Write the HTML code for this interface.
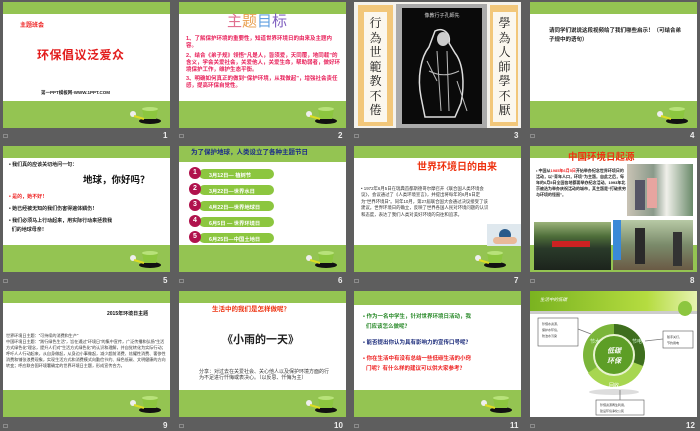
<!DOCTYPE html>
<html><head><meta charset="utf-8"><style>
*{margin:0;padding:0;box-sizing:border-box}
body{width:700px;height:431px;background:#5e5e5e;position:relative;overflow:hidden;font-family:"Liberation Sans","Noto Sans CJK SC",sans-serif}
.s{position:absolute;width:167px;height:126px;background:#fff;overflow:hidden}
.top{position:absolute;left:0;top:0;width:100%;height:12px;background:#94c452}
.bot{position:absolute;left:0;bottom:0;width:100%;height:27px;background:#94c452}
.cup{position:absolute;right:8px;bottom:4px;width:34px;height:20px}
.n{position:absolute;color:#eee;font-size:8px;font-weight:bold}
.ic{position:absolute;width:5px;height:4px;border:1px solid #aaa;opacity:.6}
.t{position:absolute;font-weight:bold;line-height:1.25}
.cp{position:absolute;top:10px;width:23px;height:110px;background:#fbf7ee;font-family:'Noto Serif CJK SC',serif;font-size:12px;line-height:14.5px;text-align:center;color:#111;padding-top:4px}
</style></head><body>

<!-- slide 1 -->
<div class="s" style="left:3px;top:2px">
<div class="top"></div><div class="bot"></div>
<div class="t" style="left:17px;top:21px;color:#e22;font-size:6px">主题班会</div>
<div class="t" style="left:34px;top:46px;color:#e21b1b;font-size:12px;letter-spacing:.5px">环保倡议泛爱众</div>
<div class="t" style="left:38px;top:88px;color:#222;font-size:4.5px">第一PPT模板网-WWW.1PPT.COM</div>
<svg class="cup" viewBox="0 0 34 20"><ellipse cx="22" cy="17" rx="11" ry="3" fill="#111"/><path d="M14 5h16l-2 10h-12z" fill="#8cc63f"/><ellipse cx="22" cy="5" rx="8" ry="2" fill="#b8e27a"/><circle cx="5" cy="10" r="3" fill="#eee"/><path d="M6 12l10 3" stroke="#dd2" stroke-width="2"/></svg>
</div>
<!-- slide 2 -->
<div class="s" style="left:179px;top:2px">
<div class="top"></div><div class="bot"></div>
<div class="t" style="left:48px;top:11px;font-size:15px;font-weight:normal;color:#c9a"><span style="color:#e07090">主</span><span style="color:#e9a050">题</span><span style="color:#60a0e0">目</span><span style="color:#8060c0">标</span></div>
<div class="t" style="left:7px;top:34px;width:156px;color:#e8205a;font-size:5.5px">1、了解保护环境的重要性，知道世界环境日的由来及主题内容。<br><span style="display:block;margin-top:3px">2、结合《弟子规》领悟“凡是人，皆须爱，天同覆，地同载”的含义，学会关爱社会，关爱他人，关爱生命，帮助弱者，做好环境保护工作，维护生态平衡。</span><span style="display:block;margin-top:3px">3、明确如何真正的做到“保护环境，从我做起”，增强社会责任感，提高环保自觉性。</span></div>
<svg class="cup" viewBox="0 0 34 20"><ellipse cx="22" cy="17" rx="11" ry="3" fill="#111"/><path d="M14 5h16l-2 10h-12z" fill="#8cc63f"/><ellipse cx="22" cy="5" rx="8" ry="2" fill="#b8e27a"/><circle cx="5" cy="10" r="3" fill="#eee"/><path d="M6 12l10 3" stroke="#dd2" stroke-width="2"/></svg>
</div>
<!-- slide 3 -->
<div class="s" style="left:354px;top:2px;background:#f4f2ec">
<div style="position:absolute;left:4px;top:3px;width:35px;height:121px;background:#f2c77a"></div>
<div class="cp" style="left:10px">行為世範教不倦</div>
<div style="position:absolute;left:42px;top:2px;width:91px;height:124px;background:#aaa"></div>
<div style="position:absolute;left:48px;top:6px;width:80px;height:116px;background:#0a0a0a;color:#ddd;font-size:5px;text-align:center;padding-top:4px">像教行子孔師先
<svg width="70" height="100" viewBox="0 0 70 100" style="display:block;margin:2px auto"><path d="M28 10c8-4 16 2 14 12l6 10c8 10 10 30 6 50l-6 14h-30l-4-20c-4-20 0-40 8-50z" fill="none" stroke="#ddd" stroke-width="1.5"/><path d="M30 30l4 60M40 30l2 60M22 50c10 5 20 5 30 0M20 40l10 20M50 60l10 30" stroke="#bbb" stroke-width="1" fill="none"/><ellipse cx="36" cy="18" rx="6" ry="7" fill="#ccc"/></svg></div>
<div style="position:absolute;left:136px;top:3px;width:28px;height:121px;background:#f2c77a"></div>
<div class="cp" style="left:139px">學為人師學不厭</div>
</div>
<!-- slide 4 -->
<div class="s" style="left:530px;top:2px">
<div class="top"></div><div class="bot"></div>
<div class="t" style="left:19px;top:25px;width:135px;color:#222;font-size:5.5px;line-height:1.6">请同学们说说这段视频给了我们哪些启示！（可结合弟子规中的语句）</div>
<svg class="cup" viewBox="0 0 34 20"><ellipse cx="22" cy="17" rx="11" ry="3" fill="#111"/><path d="M14 5h16l-2 10h-12z" fill="#8cc63f"/><ellipse cx="22" cy="5" rx="8" ry="2" fill="#b8e27a"/><circle cx="5" cy="10" r="3" fill="#eee"/><path d="M6 12l10 3" stroke="#dd2" stroke-width="2"/></svg>
</div>

<!-- slide 5 -->
<div class="s" style="left:3px;top:146px">
<div class="top"></div><div class="bot"></div>
<div class="t" style="left:6px;top:16px;font-size:5px;color:#222">• 我们真的应该关切地问一句：</div>
<div class="t" style="left:80px;top:29px;font-size:9.5px;color:#111">地球，你好吗？</div>
<div class="t" style="left:6px;top:48px;font-size:5px;color:#e22">• 是的，她不好！</div>
<div class="t" style="left:6px;top:60px;font-size:5px;color:#222">• 她已经被无知的我们伤害得遍体鳞伤！</div>
<div class="t" style="left:6px;top:71px;width:160px;font-size:5px;color:#222;line-height:1.8">• 我们必须马上行动起来，用实际行动来拯救我<br>&nbsp;&nbsp;们的地球母亲！</div>
<svg class="cup" viewBox="0 0 34 20"><ellipse cx="22" cy="17" rx="11" ry="3" fill="#111"/><path d="M14 5h16l-2 10h-12z" fill="#8cc63f"/><ellipse cx="22" cy="5" rx="8" ry="2" fill="#b8e27a"/><circle cx="5" cy="10" r="3" fill="#eee"/><path d="M6 12l10 3" stroke="#dd2" stroke-width="2"/></svg>
</div>
<!-- slide 6 -->
<div class="s" style="left:179px;top:146px">
<div class="top" style="height:16px"></div><div class="bot"></div>
<div class="t" style="left:12px;top:3px;font-size:6.5px;color:#1a2a8a">为了保护地球，人类设立了各种主题节日</div>
<div style="position:absolute;left:10px;top:22px">
<div style="position:relative;height:16px"><div style="position:absolute;left:10px;top:1px;width:75px;height:10px;border-radius:5px;background:#8cc63f;color:#fff;font-size:5.3px;font-weight:bold;padding:2px 0 0 10px">3月12日— 植树节</div><div style="position:absolute;left:0;top:-1px;width:12px;height:12px;border-radius:50%;background:#b0124d;color:#fff;font-size:7px;text-align:center;font-weight:bold;line-height:12px">1</div></div>
<div style="position:relative;height:16px"><div style="position:absolute;left:10px;top:1px;width:75px;height:10px;border-radius:5px;background:#8cc63f;color:#fff;font-size:5.3px;font-weight:bold;padding:2px 0 0 10px">3月22日—世界水日</div><div style="position:absolute;left:0;top:-1px;width:12px;height:12px;border-radius:50%;background:#b0124d;color:#fff;font-size:7px;text-align:center;font-weight:bold;line-height:12px">2</div></div>
<div style="position:relative;height:16px"><div style="position:absolute;left:10px;top:1px;width:75px;height:10px;border-radius:5px;background:#8cc63f;color:#fff;font-size:5.3px;font-weight:bold;padding:2px 0 0 10px">4月22日—世界地球日</div><div style="position:absolute;left:0;top:-1px;width:12px;height:12px;border-radius:50%;background:#b0124d;color:#fff;font-size:7px;text-align:center;font-weight:bold;line-height:12px">3</div></div>
<div style="position:relative;height:16px"><div style="position:absolute;left:10px;top:1px;width:75px;height:10px;border-radius:5px;background:#8cc63f;color:#fff;font-size:5.3px;font-weight:bold;padding:2px 0 0 10px">6月5日 — 世界环境日</div><div style="position:absolute;left:0;top:-1px;width:12px;height:12px;border-radius:50%;background:#b0124d;color:#fff;font-size:7px;text-align:center;font-weight:bold;line-height:12px">4</div></div>
<div style="position:relative;height:16px"><div style="position:absolute;left:10px;top:1px;width:75px;height:10px;border-radius:5px;background:#8cc63f;color:#fff;font-size:5.3px;font-weight:bold;padding:2px 0 0 10px">6月25日—中国土地日</div><div style="position:absolute;left:0;top:-1px;width:12px;height:12px;border-radius:50%;background:#b0124d;color:#fff;font-size:7px;text-align:center;font-weight:bold;line-height:12px">5</div></div>
</div>
<svg class="cup" viewBox="0 0 34 20"><ellipse cx="22" cy="17" rx="11" ry="3" fill="#111"/><path d="M14 5h16l-2 10h-12z" fill="#8cc63f"/><ellipse cx="22" cy="5" rx="8" ry="2" fill="#b8e27a"/><circle cx="5" cy="10" r="3" fill="#eee"/><path d="M6 12l10 3" stroke="#dd2" stroke-width="2"/></svg>
</div>
<!-- slide 7 -->
<div class="s" style="left:354px;top:146px">
<div class="top"></div><div class="bot"></div>
<div class="t" style="left:63px;top:16px;font-size:10px;color:#e31">世界环境日的由来</div>
<div class="t" style="left:7px;top:40px;width:128px;font-size:4.4px;color:#333;font-weight:normal;line-height:1.45">• 1972年6月5日在瑞典首都斯德哥尔摩召开《联合国人类环境会议》，会议通过了《人类环境宣言》，并提出将每年的6月5日定为“世界环境日”。同年10月，第27届联合国大会通过决议接受了该建议。世界环境日的确立，反映了世界各国人民对环境问题的认识和态度，表达了我们人类对美好环境的向往和追求。</div>
<div style="position:absolute;left:133px;top:78px;width:34px;height:22px;background:#dfe8ee"><div style="position:absolute;left:12px;top:5px;width:12px;height:12px;border-radius:50%;background:#2a5a8a"></div><div style="position:absolute;left:6px;top:13px;width:24px;height:7px;border-radius:4px;background:#e9b99a"></div></div>
<svg class="cup" viewBox="0 0 34 20" style="right:14px"><ellipse cx="22" cy="17" rx="11" ry="3" fill="#111"/><path d="M14 5h16l-2 10h-12z" fill="#8cc63f"/><ellipse cx="22" cy="5" rx="8" ry="2" fill="#b8e27a"/><circle cx="5" cy="10" r="3" fill="#eee"/><path d="M6 12l10 3" stroke="#dd2" stroke-width="2"/></svg>
</div>
<!-- slide 8 -->
<div class="s" style="left:530px;top:146px">
<div class="top"></div><div class="bot"></div>
<div class="t" style="left:38px;top:6px;font-size:9.5px;color:#e31">中国环境日起源</div>
<div class="t" style="left:6px;top:22px;width:90px;font-size:4px;color:#222;line-height:1.5">• 中国从<span style="color:#e22">1985年6月5日</span>开始举办纪念世界环境日的活动，以“青年人口，环境”为主题。自此之后，每年的6月5日全国各地都要举办纪念活动。1993年北京被选为举办庆祝活动的城市，其主题是“打破贫穷与环境的怪圈”。</div>
<div style="position:absolute;left:97px;top:18px;width:66px;height:52px;background:linear-gradient(90deg,#c9c3b5,#8a9a8a 40%,#f0f0ea 60%,#6a8a6a)"><div style="position:absolute;left:20px;top:14px;width:10px;height:30px;background:#e7a5a0"></div><div style="position:absolute;left:8px;top:16px;width:10px;height:30px;background:#556"></div></div>
<div style="position:absolute;left:4px;top:76px;width:77px;height:48px;background:linear-gradient(180deg,#9bb37a 0,#4e6e3a 30%,#2a3a2a 55%,#1c241c)"><div style="position:absolute;left:18px;top:19px;width:38px;height:6px;background:#c22"></div></div>
<div style="position:absolute;left:83px;top:74px;width:80px;height:50px;background:linear-gradient(180deg,#b7c9a5,#7a8a6a 50%,#6a5a45)"><div style="position:absolute;left:0;top:0;width:8px;height:40px;background:#3a8ad8"></div><div style="position:absolute;left:22px;top:8px;width:10px;height:36px;background:#2a2a2a"></div><div style="position:absolute;left:60px;top:12px;width:9px;height:34px;background:#333"></div></div>
</div>

<!-- slide 9 -->
<div class="s" style="left:3px;top:291px">
<div class="top"></div><div class="bot"></div>
<div class="t" style="left:104px;top:20px;font-size:5px;color:#111">2015年环境日主题</div>
<div style="position:absolute;left:3px;top:42px;width:160px;font-size:4.1px;color:#333;line-height:1.45">世界环境日主题：“可持续的消费和生产”<br>中国环境日主题：“践行绿色生活”，旨在通过“环境日”的集中宣传，广泛传播和弘扬“生活方式绿色化”理念，提升人们对“生活方式绿色化”的认识和理解，并自觉转化为实际行动；呼吁人人行动起来，从自身做起，从身边小事做起，减少超前消费、炫耀性消费、奢侈性消费和铺张浪费现象，实现生活方式和消费模式向勤俭节约、绿色低碳、文明健康的方向转变；呼应联合国环境署确定的世界环境日主题，形成宣传合力。</div>
<svg class="cup" viewBox="0 0 34 20"><ellipse cx="22" cy="17" rx="11" ry="3" fill="#111"/><path d="M14 5h16l-2 10h-12z" fill="#8cc63f"/><ellipse cx="22" cy="5" rx="8" ry="2" fill="#b8e27a"/><circle cx="5" cy="10" r="3" fill="#eee"/><path d="M6 12l10 3" stroke="#dd2" stroke-width="2"/></svg>
</div>
<!-- slide 10 -->
<div class="s" style="left:179px;top:291px">
<div class="top"></div><div class="bot"></div>
<div class="t" style="left:33px;top:15px;font-size:6.5px;color:#e31">生活中的我们是怎样做呢？</div>
<div class="t" style="left:43px;top:43px;font-size:11px;color:#222">《小雨的一天》</div>
<div style="position:absolute;left:20px;top:78px;width:130px;font-size:5px;color:#333;line-height:1.25">分享：对过去在关爱社会、关心他人以及保护环境方面的行为不足进行忏悔或表决心。（以反思、忏悔为主）</div>
<svg class="cup" viewBox="0 0 34 20"><ellipse cx="22" cy="17" rx="11" ry="3" fill="#111"/><path d="M14 5h16l-2 10h-12z" fill="#8cc63f"/><ellipse cx="22" cy="5" rx="8" ry="2" fill="#b8e27a"/><circle cx="5" cy="10" r="3" fill="#eee"/><path d="M6 12l10 3" stroke="#dd2" stroke-width="2"/></svg>
</div>
<!-- slide 11 -->
<div class="s" style="left:354px;top:291px">
<div class="top" style="height:14px"></div><div class="bot"></div>
<div class="t" style="left:9px;top:22px;width:155px;font-size:5.5px;color:#2a8a2a;line-height:1.75">• 作为一名中学生，针对世界环境日活动，我<br>&nbsp;&nbsp;们应该怎么做呢？</div>
<div class="t" style="left:9px;top:49px;font-size:5.5px;color:#1a2a7a">• 能否提出你认为具有影响力的宣传口号呢？</div>
<div class="t" style="left:9px;top:64px;width:155px;font-size:5.5px;color:#e22;line-height:1.75">• 你在生活中有没有总结一些低碳生活的小窍<br>&nbsp;&nbsp;门呢？有什么样的建议可以供大家参考？</div>
<svg class="cup" viewBox="0 0 34 20"><ellipse cx="22" cy="17" rx="11" ry="3" fill="#111"/><path d="M14 5h16l-2 10h-12z" fill="#8cc63f"/><ellipse cx="22" cy="5" rx="8" ry="2" fill="#b8e27a"/><circle cx="5" cy="10" r="3" fill="#eee"/><path d="M6 12l10 3" stroke="#dd2" stroke-width="2"/></svg>
</div>
<!-- slide 12 -->
<div class="s" style="left:530px;top:291px">
<div style="position:absolute;left:0;top:0;width:100%;height:20px;background:linear-gradient(90deg,#7ab320,#b5dc40 70%,#e6f2b0)"></div>
<div style="position:absolute;left:0;top:20px;width:100%;height:3px;background:#ccc"></div>
<div style="position:absolute;left:10px;top:6px;font-size:4.5px;color:#fff;font-style:italic">生活中的低碳</div>
<div style="position:absolute;left:148px;top:10px;width:14px;height:15px;border-radius:50%;background:#8cc63f"></div>
<svg style="position:absolute;left:0;top:0" width="167" height="126" viewBox="0 0 167 126">
<circle cx="84" cy="64" r="31" fill="#7bb53a"/><path d="M84 33a31 31 0 0 1 29 42l-29-11z" fill="#3e6e1e"/><path d="M113 75a31 31 0 0 1-55 7l26-18z" fill="#a7d650"/>
<circle cx="84" cy="64" r="20" fill="#5d9e26" stroke="#e8f3d0" stroke-width="2"/>
<text x="84" y="62" font-size="7" fill="#fff" text-anchor="middle" font-style="italic" font-weight="bold" font-family="Noto Sans CJK SC">低碳</text>
<text x="84" y="72" font-size="7" fill="#fff" text-anchor="middle" font-style="italic" font-weight="bold" font-family="Noto Sans CJK SC">环保</text>
<text x="60" y="52" font-size="5" fill="#dfd" font-family="Noto Sans CJK SC">节水</text>
<text x="102" y="52" font-size="5" fill="#dfd" font-family="Noto Sans CJK SC">节电</text>
<text x="79" y="96" font-size="5" fill="#fff" font-family="Noto Sans CJK SC">回收</text>
<ellipse cx="84" cy="101" rx="25" ry="3" fill="#ddd"/>
<rect x="8" y="27" width="40" height="28" fill="#fff" stroke="#555" stroke-width=".6"/>
<rect x="133" y="40" width="30" height="17" fill="#fff" stroke="#555" stroke-width=".6"/>
<rect x="66" y="109" width="48" height="15" fill="#fff" stroke="#555" stroke-width=".6"/>
<path d="M48 38l13 5M133 48l-18 2M90 109v-10" stroke="#777" stroke-width=".8"/>
<text x="12" y="34" font-size="3" fill="#333" font-family="Noto Sans CJK SC">珍惜水资源，</text>
<text x="12" y="40" font-size="3" fill="#333" font-family="Noto Sans CJK SC">保护水环境，</text>
<text x="12" y="46" font-size="3" fill="#333" font-family="Noto Sans CJK SC">防治水污染</text>
<text x="137" y="47" font-size="3" fill="#333" font-family="Noto Sans CJK SC">随手关灯，</text>
<text x="137" y="53" font-size="3" fill="#333" font-family="Noto Sans CJK SC">节约用电</text>
<text x="70" y="115" font-size="3" fill="#333" font-family="Noto Sans CJK SC">珍惜资源再生利用，</text>
<text x="70" y="121" font-size="3" fill="#333" font-family="Noto Sans CJK SC">建设环境净化公民</text>
</svg>
</div>

<!-- labels -->
<div class="ic" style="left:3px;top:134px"></div><div class="n" style="left:163px;top:131px">1</div>
<div class="ic" style="left:179px;top:134px"></div><div class="n" style="left:338px;top:131px">2</div>
<div class="ic" style="left:354px;top:134px"></div><div class="n" style="left:514px;top:131px">3</div>
<div class="ic" style="left:530px;top:134px"></div><div class="n" style="left:690px;top:131px">4</div>
<div class="ic" style="left:3px;top:279px"></div><div class="n" style="left:163px;top:276px">5</div>
<div class="ic" style="left:179px;top:279px"></div><div class="n" style="left:338px;top:276px">6</div>
<div class="ic" style="left:354px;top:279px"></div><div class="n" style="left:514px;top:276px">7</div>
<div class="ic" style="left:530px;top:279px"></div><div class="n" style="left:690px;top:276px">8</div>
<div class="ic" style="left:3px;top:424px"></div><div class="n" style="left:163px;top:421px">9</div>
<div class="ic" style="left:179px;top:424px"></div><div class="n" style="left:334px;top:421px">10</div>
<div class="ic" style="left:354px;top:424px"></div><div class="n" style="left:510px;top:421px">11</div>
<div class="ic" style="left:530px;top:424px"></div><div class="n" style="left:686px;top:421px">12</div>
</body></html>
